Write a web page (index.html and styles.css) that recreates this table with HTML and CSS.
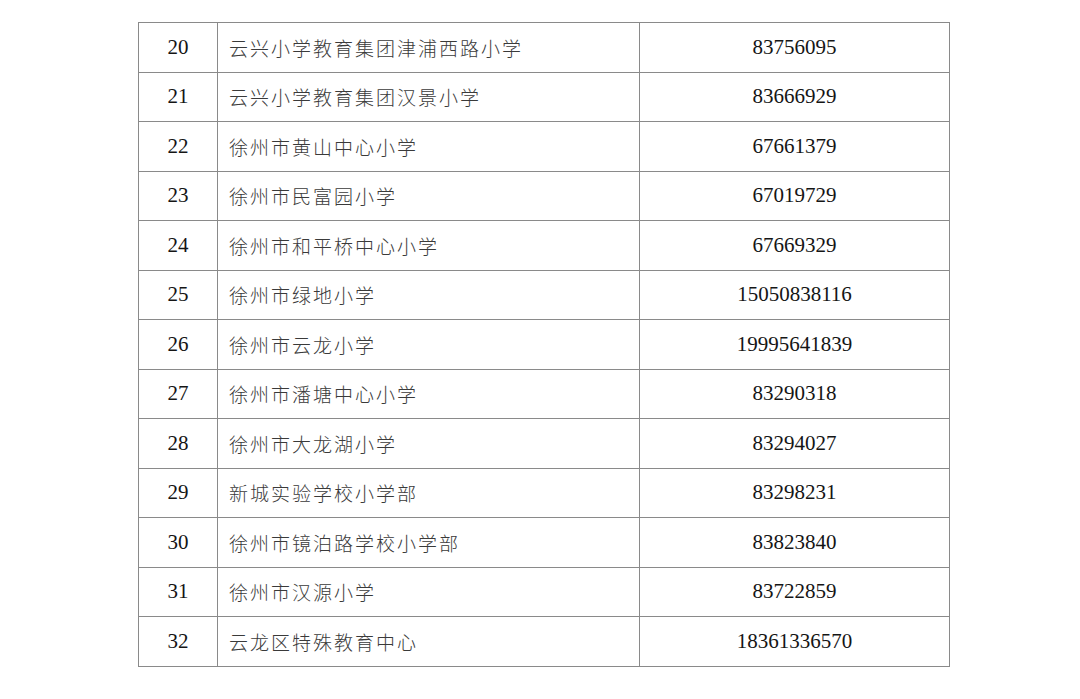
FILE: index.html
```html
<!DOCTYPE html>
<html lang="zh">
<head>
<meta charset="utf-8">
<link rel="stylesheet" href="styles.css">
</head>
<body>
<table class="list">
<colgroup><col class="c-no"><col class="c-name"><col class="c-tel"></colgroup>
<tbody>
<tr><td class="no">20</td><td class="name">云兴小学教育集团津浦西路小学</td><td class="tel">83756095</td></tr>
<tr><td class="no">21</td><td class="name">云兴小学教育集团汉景小学</td><td class="tel">83666929</td></tr>
<tr><td class="no">22</td><td class="name">徐州市黄山中心小学</td><td class="tel">67661379</td></tr>
<tr><td class="no">23</td><td class="name">徐州市民富园小学</td><td class="tel">67019729</td></tr>
<tr><td class="no">24</td><td class="name">徐州市和平桥中心小学</td><td class="tel">67669329</td></tr>
<tr><td class="no">25</td><td class="name">徐州市绿地小学</td><td class="tel">15050838116</td></tr>
<tr><td class="no">26</td><td class="name">徐州市云龙小学</td><td class="tel">19995641839</td></tr>
<tr><td class="no">27</td><td class="name">徐州市潘塘中心小学</td><td class="tel">83290318</td></tr>
<tr><td class="no">28</td><td class="name">徐州市大龙湖小学</td><td class="tel">83294027</td></tr>
<tr><td class="no">29</td><td class="name">新城实验学校小学部</td><td class="tel">83298231</td></tr>
<tr><td class="no">30</td><td class="name">徐州市镜泊路学校小学部</td><td class="tel">83823840</td></tr>
<tr><td class="no">31</td><td class="name">徐州市汉源小学</td><td class="tel">83722859</td></tr>
<tr><td class="no">32</td><td class="name">云龙区特殊教育中心</td><td class="tel">18361336570</td></tr>
</tbody>
</table>
</body>
</html>
```
FILE: styles.css
```css
html, body {
  margin: 0;
  padding: 0;
  background: #ffffff;
}
body {
  padding: 22px 0 0 138px;
}
.list {
  border-collapse: collapse;
  table-layout: fixed;
  width: 811px;
}
.c-no { width: 79px; }
.c-name { width: 422px; }
.c-tel { width: 310px; }
.list td {
  border: 1px solid #8a8a8a;
  height: 48.5px;
  padding: 0;
  vertical-align: middle;
}
.no, .tel {
  text-align: center;
  font-family: "Liberation Serif", "Times New Roman", serif;
  font-size: 21px;
  color: #151515;
}
.name {
  text-align: left;
  padding-left: 11px !important;
  font-family: "Noto Sans CJK SC", sans-serif;
  font-size: 19px;
  font-weight: 300;
  letter-spacing: 2px;
  color: #3a3a3a;
}
```
